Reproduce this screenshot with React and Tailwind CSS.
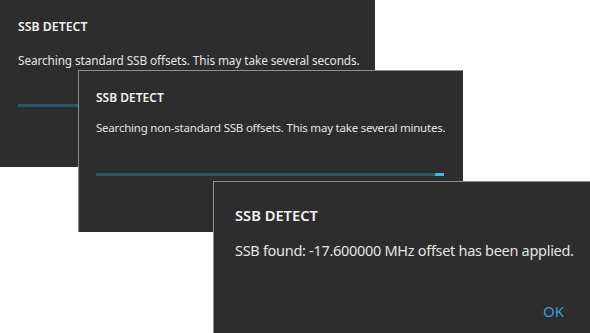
export default function App() {
  const font = { fontFamily: '"Noto Sans", "Open Sans", sans-serif' };
  return (
    <div className="relative w-[590px] h-[333px] bg-white overflow-hidden" style={font}>
      {/* Dialog 1 */}
      <div className="absolute left-0 top-0 w-[375px] h-[167px] bg-[#2d2d2d] flex flex-col pl-[18px] pr-[16px]">
        <div className="mt-[19px] text-[12.3px] leading-[16px] font-semibold text-[#f2f2f2] whitespace-nowrap">SSB DETECT</div>
        <div className="mt-[17px] text-[11.8px] leading-[16px] tracking-[-0.1px] text-[#e4e4e4] whitespace-nowrap">Searching standard SSB offsets. This may take several seconds.</div>
        <div className="mt-[36px] h-[3px] bg-[#2e5563]" />
      </div>
      {/* Dialog 2 */}
      <div className="absolute left-[78px] top-[70px] w-[385px] h-[162px] bg-[#2d2d2d] border-t border-l border-[#8e8e8e] flex flex-col pl-[17px] pr-[19px]">
        <div className="mt-[19px] text-[12px] leading-[16px] font-semibold text-[#f2f2f2] whitespace-nowrap">SSB DETECT</div>
        <div className="mt-[14px] text-[11.5px] leading-[16px] tracking-[-0.22px] text-[#e4e4e4] whitespace-nowrap">Searching non-standard SSB offsets. This may take several minutes.</div>
        <div className="mt-[37px] h-[3px] bg-[#2e5563] flex justify-end">
          <div className="w-[9px] h-full bg-[#3db8e8]" />
        </div>
      </div>
      {/* Dialog 3 */}
      <div className="absolute left-[213px] top-[181px] w-[377px] h-[152px] bg-[#2d2d2d] border-t border-l border-[#8e8e8e] flex flex-col pl-[21px] pr-[26px]">
        <div className="mt-[23px] text-[14.7px] leading-[20px] font-semibold text-[#f2f2f2] whitespace-nowrap">SSB DETECT</div>
        <div className="mt-[15px] text-[14.5px] leading-[20px] tracking-[-0.3px] text-[#e4e4e4] whitespace-nowrap">SSB found: -17.600000 MHz offset has been applied.</div>
        <div className="mt-[41px] flex justify-end">
          <div className="text-[15px] leading-[20px] text-[#3a9ed9]">OK</div>
        </div>
      </div>
    </div>
  );
}
